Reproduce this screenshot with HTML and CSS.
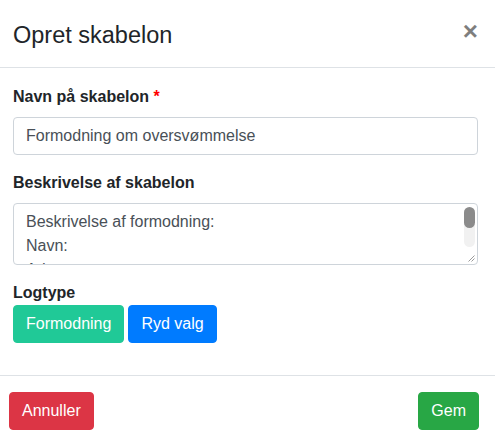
FILE: index.html
```html
<!DOCTYPE html>
<html lang="da">
<head>
<meta charset="utf-8">
<title>Opret skabelon</title>
<link rel="stylesheet" href="styles.css">
</head>
<body>
<div class="modal">
  <div class="modal-header">
    <h5 class="modal-title">Opret skabelon</h5>
    <button class="close" type="button" aria-label="Luk">&times;</button>
  </div>
  <div class="modal-body">
    <div class="form-group">
      <label class="form-label" for="navn">Navn på skabelon <span class="req">*</span></label>
      <input class="form-control" id="navn" type="text" value="Formodning om oversvømmelse">
    </div>
    <div class="form-group">
      <label class="form-label" for="beskrivelse">Beskrivelse af skabelon</label>
      <div class="textarea-wrap">
        <textarea class="form-control textarea" id="beskrivelse" rows="2">Beskrivelse af formodning:
Navn:
Adresse:
Telefon:</textarea>
        <div class="scroll-track"><div class="scroll-thumb"></div></div>
        <svg class="grip" width="8" height="8" viewBox="0 0 8 8" aria-hidden="true">
          <path d="M7.5 1.5 L1.5 7.5 M7.5 4.5 L4.5 7.5" stroke="#9a9a9a" stroke-width="1" fill="none"/>
        </svg>
      </div>
    </div>
    <div class="form-group">
      <label class="form-label tight">Logtype</label>
      <div class="btn-row">
        <button class="btn btn-teal" type="button">Formodning</button>
        <button class="btn btn-blue" type="button">Ryd valg</button>
      </div>
    </div>
  </div>
  <div class="modal-footer">
    <button class="btn btn-red" type="button">Annuller</button>
    <button class="btn btn-green" type="button">Gem</button>
  </div>
</div>
</body>
</html>
```

FILE: styles.css
```css
* { box-sizing: border-box; }

html, body {
  margin: 0;
  padding: 0;
  background: #ffffff;
}

body {
  font-family: "Liberation Sans", Arial, sans-serif;
  color: #212529;
  width: 495px;
  height: 446px;
  overflow: hidden;
}

.modal {
  background: #ffffff;
  width: 495px;
  height: 446px;
  display: flex;
  flex-direction: column;
}

.modal-header {
  display: flex;
  align-items: flex-start;
  justify-content: space-between;
  height: 68px;
  padding: 18px 17px 0 13px;
  border-bottom: 1px solid #dee2e6;
}

.modal-title {
  margin: 0;
  font-size: 23.5px;
  font-weight: 400;
  line-height: 35px;
  color: #212529;
}

.close {
  margin: -2px 0 0 0;
  padding: 0;
  border: 0;
  background: transparent;
  font-family: "Liberation Sans", Arial, sans-serif;
  font-size: 26px;
  font-weight: 700;
  line-height: 30px;
  color: #000000;
  opacity: 0.5;
  cursor: pointer;
}

.modal-body {
  padding: 17px 17px 16px 13px;
  flex: 0 0 auto;
}

.form-group {
  margin-bottom: 16px;
}

.form-label {
  display: block;
  font-size: 16px;
  font-weight: 700;
  line-height: 24px;
  margin-bottom: 8px;
}

.form-label.tight {
  margin-bottom: 0;
}

.req {
  color: #ff0000;
}

.form-control {
  display: block;
  width: 100%;
  height: 38px;
  padding: 6px 12px;
  font-family: "Liberation Sans", Arial, sans-serif;
  font-size: 16px;
  line-height: 24px;
  color: #495057;
  background: #ffffff;
  border: 1px solid #ced4da;
  border-radius: 4px;
  outline: none;
}

.textarea-wrap {
  position: relative;
}

.textarea {
  height: 62px;
  resize: none;
  overflow: hidden;
  padding-right: 30px;
}

.scroll-track {
  position: absolute;
  top: 4px;
  right: 3px;
  width: 11px;
  height: 40px;
  background: #f1f1f1;
  border-radius: 6px;
}

.scroll-thumb {
  width: 11px;
  height: 21px;
  background: #8b8b8b;
  border-radius: 6px;
}

.grip {
  position: absolute;
  right: 3px;
  bottom: 3px;
}

.btn-row {
  display: flex;
  gap: 4px;
}

.btn {
  display: inline-block;
  padding: 6px 12px;
  font-family: "Liberation Sans", Arial, sans-serif;
  font-size: 16px;
  line-height: 24px;
  font-weight: 400;
  color: #ffffff;
  border: 1px solid transparent;
  border-radius: 4px;
  cursor: pointer;
}

.btn-teal { background: #20c997; border-color: #20c997; }
.btn-blue { background: #007bff; border-color: #007bff; }
.btn-red { background: #dc3545; border-color: #dc3545; }
.btn-green { background: #28a745; border-color: #28a745; }

.modal-footer {
  display: flex;
  justify-content: space-between;
  align-items: flex-start;
  border-top: 1px solid #dee2e6;
  padding: 16px 16px 0 9px;
  flex: 1 1 auto;
}
```
